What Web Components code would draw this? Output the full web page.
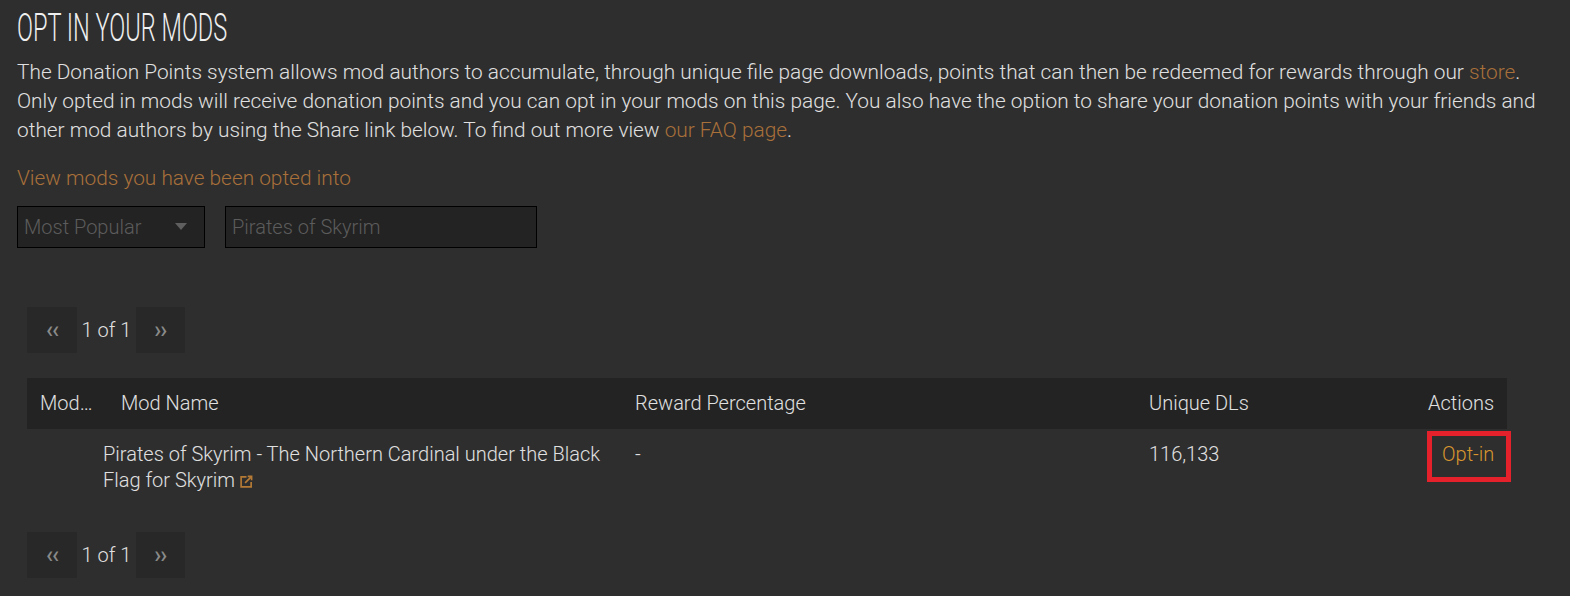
<!DOCTYPE html>
<html>
<head>
<meta charset="utf-8">
<style>
  html, body { margin: 0; background: #2e2e2e; }
  body { font-family: Roboto, "Liberation Sans", sans-serif; color: #dadada; }
</style>
</head>
<body>
<optin-page>
  <span slot="title">Opt in your mods</span>
</optin-page>

<script>
class PageIntro extends HTMLElement {
    connectedCallback() {
        this.attachShadow({mode: 'open'});
        this.shadowRoot.innerHTML = `
      <style>
:host { display: block; font-weight: 300; font-size: 20.84px; line-height: 29px; color: #e0e0e0; }
h1 {
  margin: 0;
  height: 58px;
  line-height: 57px;
  font-size: 38px;
  font-weight: 300;
  text-transform: uppercase;
  transform: scaleX(0.62);
  transform-origin: left center;
  white-space: nowrap;
  color: #efefef;
}
p { margin: 0; }
a { color: #a9703a; text-decoration: none; }
.view { display: block; margin-top: 19px; }
      </style>
      <h1><slot name="title"></slot></h1>
      <p>The Donation Points system allows mod authors to accumulate, through unique file page downloads, points that can then be redeemed for rewards through our <a href="#">store</a>. Only opted in mods will receive donation points and you can opt in your mods on this page. You also have the option to share your donation points with your friends and other mod authors by using the Share link below. To find out more view <a href="#">our FAQ page</a>.</p>
      <a class="view" href="#">View mods you have been opted into</a>
    `;
    }
}
customElements.define('page-intro', PageIntro);

class ModFilters extends HTMLElement {
    connectedCallback() {
        this.attachShadow({mode: 'open'});
        this.shadowRoot.innerHTML = `
      <style>
:host { display: flex; gap: 20px; margin-top: 13px; font-size: 20px; font-weight: 300; color: #5c5c5c; }
.box {
  box-sizing: border-box;
  height: 42px;
  background: #232323;
  border: 1px solid #000;
  display: flex;
  align-items: center;
  padding: 0 6px;
}
.select { width: 188px; justify-content: space-between; padding-right: 17px; }
.search { width: 312px; }
.arrow { width: 0; height: 0; border-left: 6px solid transparent; border-right: 6px solid transparent; border-top: 7px solid #5f5f5f; margin-bottom: 2px; }
      </style>
      <div class="box select"><span>Most Popular</span><span class="arrow"></span></div>
      <div class="box search">Pirates of Skyrim</div>
    `;
    }
}
customElements.define('mod-filters', ModFilters);

class ModPager extends HTMLElement {
    connectedCallback() {
        this.attachShadow({mode: 'open'});
        this.shadowRoot.innerHTML = `
      <style>
:host { display: flex; align-items: center; gap: 4.5px; height: 46px; font-size: 20px; font-weight: 300; color: #e0e0e0; }
.btn {
  width: 50px;
  height: 46px;
  background: #282828;
  color: #8a8a8a;
  font-size: 23px;
  font-weight: 500;
  letter-spacing: -1px;
  display: flex;
  align-items: center;
  justify-content: center;
  box-sizing: border-box;
}
.btn + span + .btn { width: 49px; }
      </style>
      <div class="btn">‹‹</div><span>1 of 1</span><div class="btn">››</div>
    `;
    }
}
customElements.define('mod-pager', ModPager);

class ModTable extends HTMLElement {
    connectedCallback() {
        this.attachShadow({mode: 'open'});
        this.shadowRoot.innerHTML = `
      <style>
:host { display: block; position: relative; width: 1480px; font-size: 20px; font-weight: 300; color: #e0e0e0; }
.head {
  display: grid;
  grid-template-columns: 81px 514px 514px 279px 92px;
  height: 51px;
  padding-bottom: 2px;
  box-sizing: border-box;
  align-items: center;
  background: #232323;
}
.head div { padding-left: 13px; white-space: nowrap; }
.row {
  display: grid;
  grid-template-columns: 76px 519px 514px 279px 92px;
  padding-top: 12px;
  line-height: 26px;
  height: 77px;
  box-sizing: border-box;
}
.name { padding-right: 13px; }
.num { padding-left: 13px; }
.act { padding-left: 27px; color: #d9962f; white-space: nowrap; }
svg { width: 13px; height: 13px; vertical-align: -1px; }
.mark {
  position: absolute;
  left: 1400px;
  top: 53px;
  width: 84px;
  height: 51px;
  box-sizing: border-box;
  border: 5px solid #e5212c;
}
      </style>
      <div class="head">
        <div>Mod…</div><div>Mod Name</div><div>Reward Percentage</div><div>Unique DLs</div><div>Actions</div>
      </div>
      <div class="row">
        <div></div>
        <div class="name">Pirates of Skyrim - The Northern Cardinal under the Black Flag for Skyrim <svg viewBox="0 0 14 14" fill="none" stroke="#b57a35" stroke-width="1.8"><path d="M7 2H1.2v10.8H12V7.5"/><path d="M5.5 8.5 12 2M8.3 1.5h4.2v4.2"/></svg></div>
        <div class="num">-</div>
        <div class="num">116,133</div>
        <div class="act">Opt-in</div>
      </div>
      <div class="mark"></div>
    `;
    }
}
customElements.define('mod-table', ModTable);

class OptinPage extends HTMLElement {
    connectedCallback() {
        this.attachShadow({mode: 'open'});
        this.shadowRoot.innerHTML = `
      <style>
:host { display: block; padding: 0 17px; }
.list { padding-left: 10px; margin-top: 59px; display: flex; flex-direction: column; }
mod-table { margin-top: 25px; }
mod-pager.last { margin-top: 26px; }
      </style>
      <page-intro><slot name="title" slot="title"></slot></page-intro>
      <mod-filters></mod-filters>
      <div class="list">
        <mod-pager></mod-pager>
        <mod-table></mod-table>
        <mod-pager class="last"></mod-pager>
      </div>
    `;
    }
}
customElements.define('optin-page', OptinPage);
</script>
</body>
</html>
